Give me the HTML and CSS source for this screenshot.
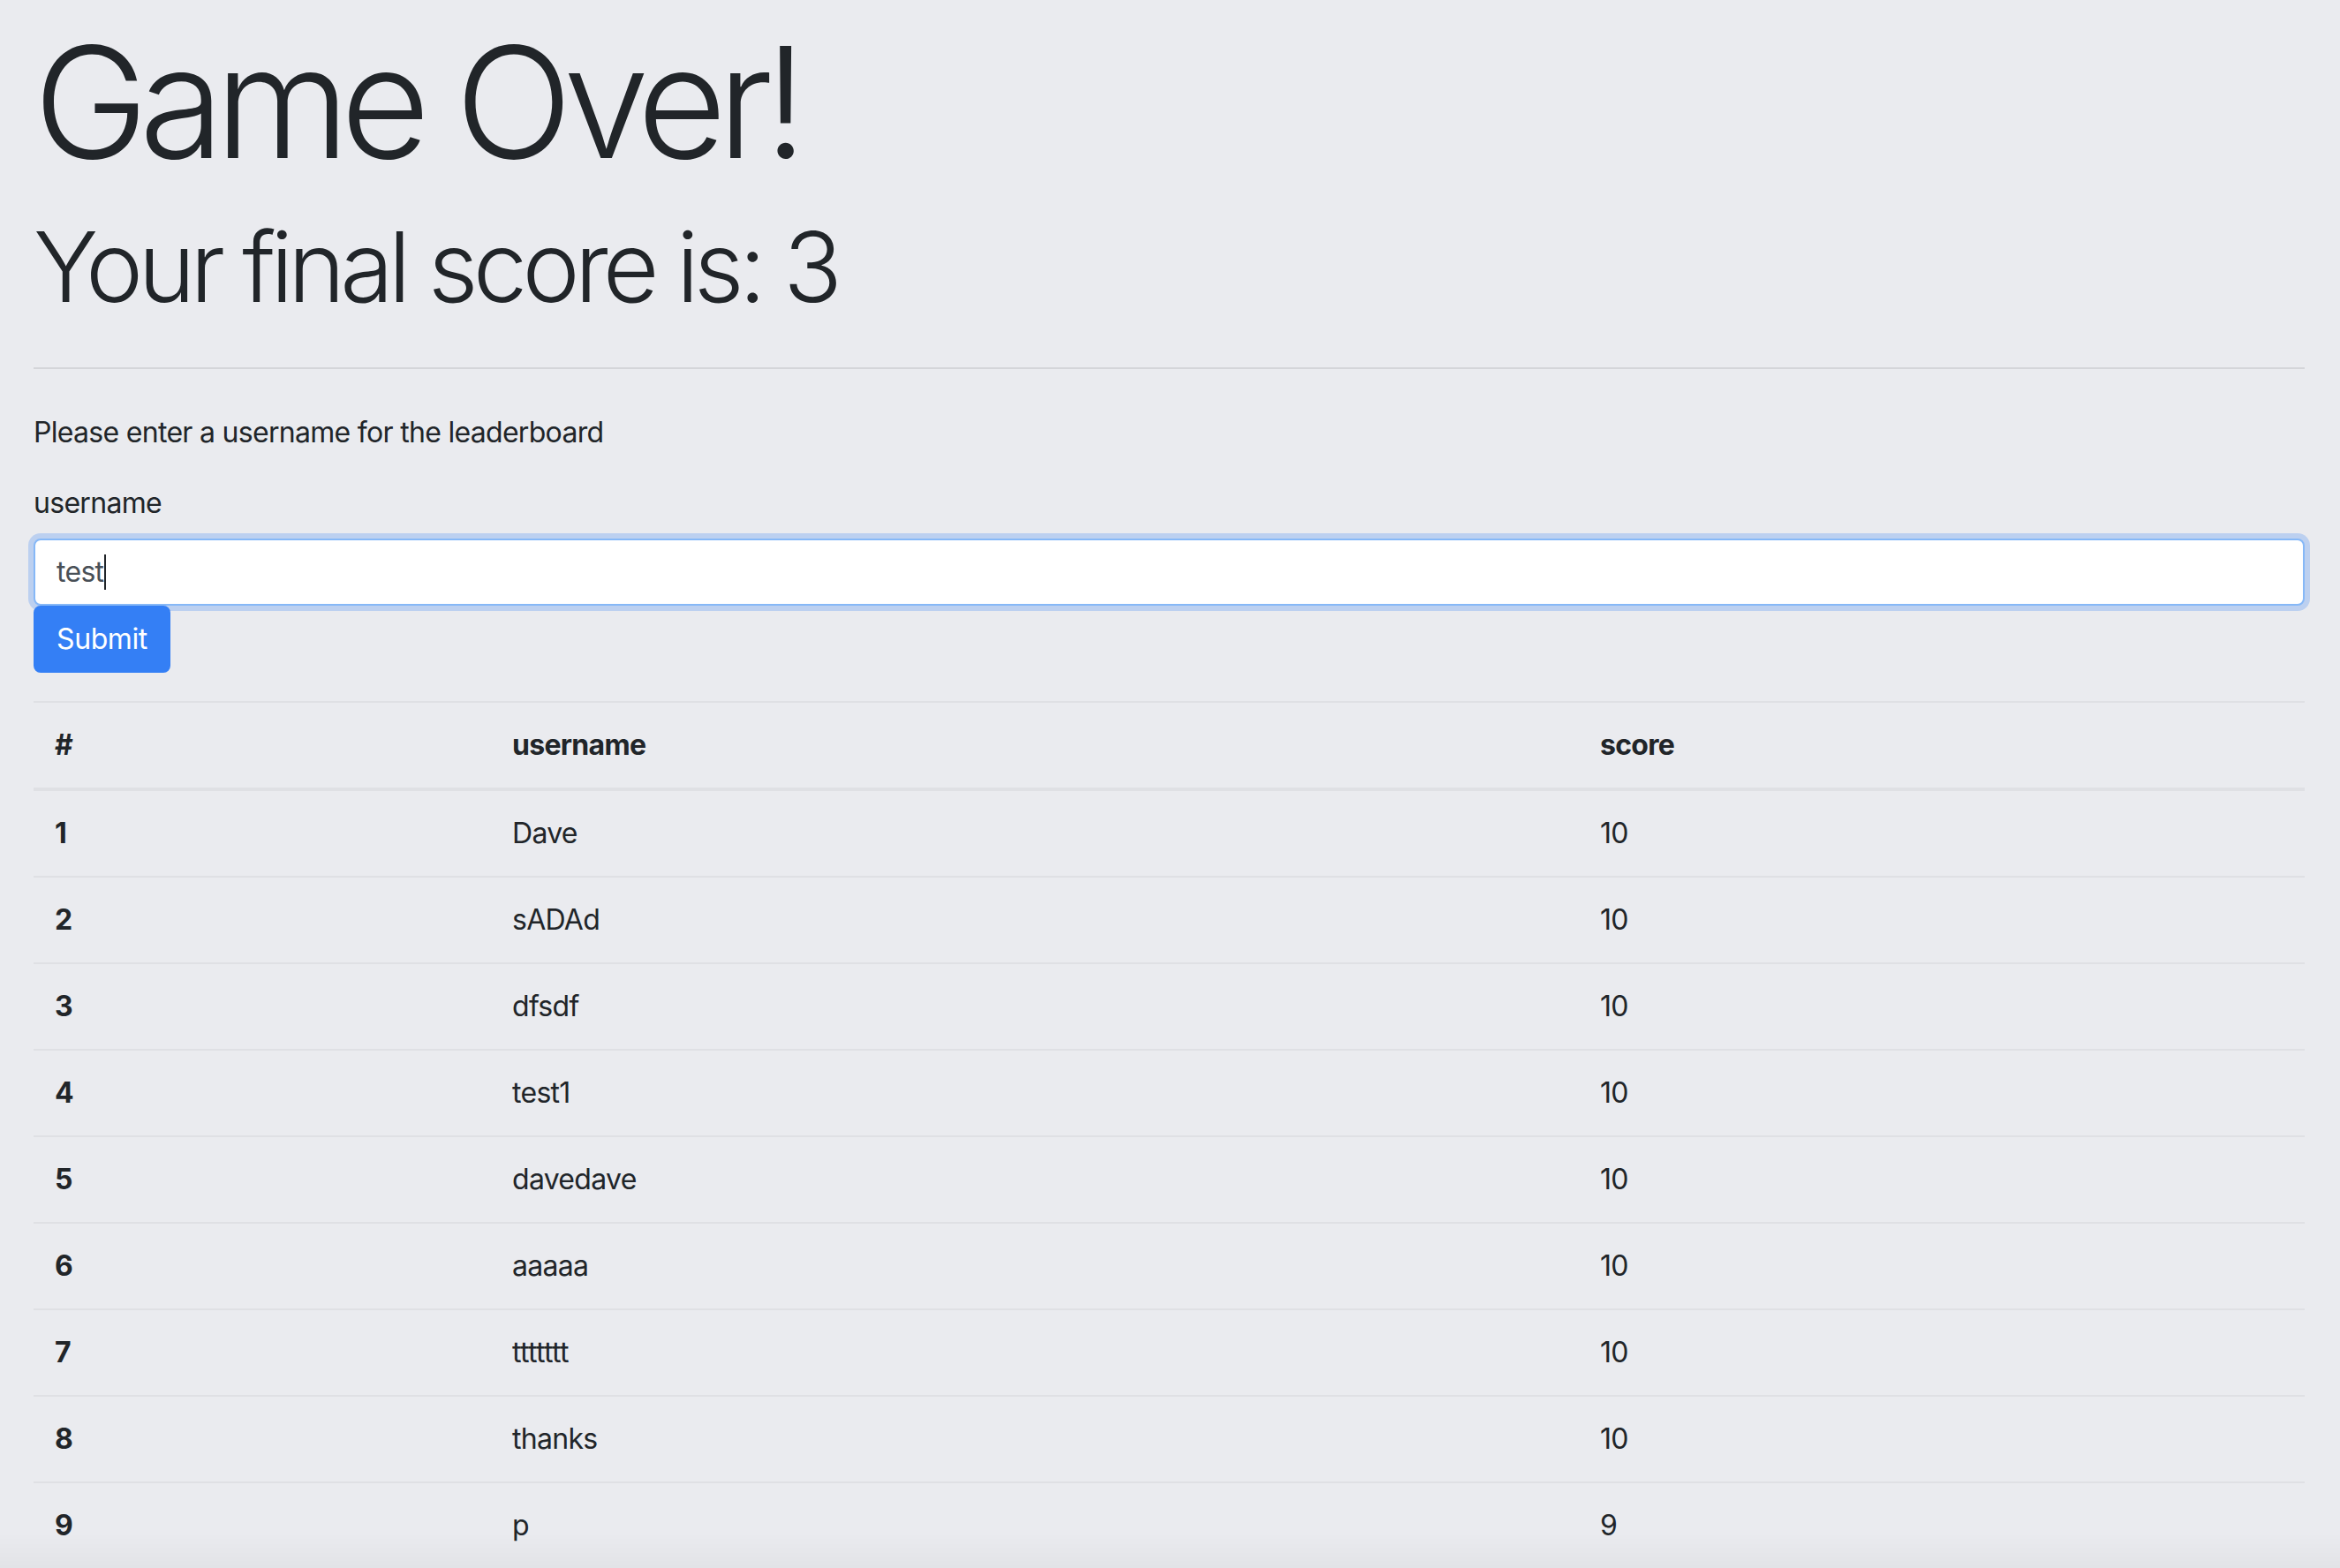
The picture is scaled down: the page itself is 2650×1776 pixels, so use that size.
FILE: index.html
```html
<!DOCTYPE html>
<html lang="en">
<head>
<meta charset="utf-8">
<title>Game Over</title>
<link rel="stylesheet" href="styles.css">
</head>
<body>
<div class="container">
  <h1 class="title">Game Over!</h1>
  <h2 class="score">Your final score is: 3</h2>
  <hr class="divider">
  <form class="entry">
    <p class="prompt">Please enter a username for the leaderboard</p>
    <label class="label">username</label>
    <div class="input"><span class="value">test</span><span class="caret"></span></div>
    <button type="button" class="btn">Submit</button>
  </form>
  <table class="board">
    <thead>
      <tr><th class="c1">#</th><th class="c2">username</th><th class="c3">score</th></tr>
    </thead>
    <tbody>
      <tr><th>1</th><td>Dave</td><td>10</td></tr>
      <tr><th>2</th><td>sADAd</td><td>10</td></tr>
      <tr><th>3</th><td>dfsdf</td><td>10</td></tr>
      <tr><th>4</th><td>test1</td><td>10</td></tr>
      <tr><th>5</th><td>davedave</td><td>10</td></tr>
      <tr><th>6</th><td>aaaaa</td><td>10</td></tr>
      <tr><th>7</th><td>ttttttt</td><td>10</td></tr>
      <tr><th>8</th><td>thanks</td><td>10</td></tr>
      <tr><th>9</th><td>p</td><td>9</td></tr>
    </tbody>
  </table>
</div>
<div class="shade"></div>
</body>
</html>
```

FILE: styles.css
```css
html, body {
  margin: 0;
  padding: 0;
  background: #eaebef;
}
body {
  font-family: Inter, "Noto Sans", sans-serif;
  color: #212529;
  font-size: 32px;
  line-height: 48px;
  letter-spacing: -0.7px;
}
.container {
  padding: 10px 40px 0 38px;
}
.title {
  font-size: 175px;
  font-weight: 300;
  line-height: 210px;
  letter-spacing: -10.4px;
  margin: 0 0 16px 0;
}
.score {
  font-size: 110px;
  font-weight: 300;
  line-height: 132px;
  letter-spacing: -5.8px;
  margin: 0;
}
.divider {
  border: 0;
  border-top: 2px solid #d4d5d9;
  margin: 48px 0 0 0;
}
.entry {
  margin: 0;
  padding-top: 48px;
}
.prompt {
  margin: 0 0 32px 0;
}
.label {
  display: block;
  margin-bottom: 16px;
}
.input {
  box-sizing: border-box;
  height: 76px;
  background: #fff;
  border: 2px solid #86b8f7;
  border-radius: 8px;
  box-shadow: 0 0 0 6px #bcd0f0;
  padding: 12px 24px;
  color: #495057;
  display: flex;
  align-items: center;
}
.caret {
  display: inline-block;
  width: 2px;
  height: 40px;
  background: #212529;
  margin-left: 1px;
}
.btn {
  font-family: inherit;
  font-size: 32px;
  line-height: 48px;
  letter-spacing: -0.4px;
  color: #fff;
  background: #347ff5;
  border: 2px solid #347ff5;
  border-radius: 8px;
  padding: 12px 24px;
  display: block;
  margin: 0;
}
.board {
  width: 100%;
  border-collapse: collapse;
  margin-top: 32px;
}
.board th, .board td {
  text-align: left;
  padding: 24px;
  border-top: 2px solid #dfe0e4;
  vertical-align: top;
}
.board thead th {
  border-bottom: 4px solid #dfe0e4;
  font-weight: 700;
}
.board tbody th {
  font-weight: 700;
}
.board td {
  font-weight: 400;
}
.c1 { width: 470px; }
.c2 { width: 1184px; }
.shade {
  position: fixed;
  left: 0;
  right: 0;
  bottom: 0;
  height: 40px;
  background: linear-gradient(to bottom, rgba(0,0,0,0), rgba(0,0,0,0.03));
  pointer-events: none;
}
```
